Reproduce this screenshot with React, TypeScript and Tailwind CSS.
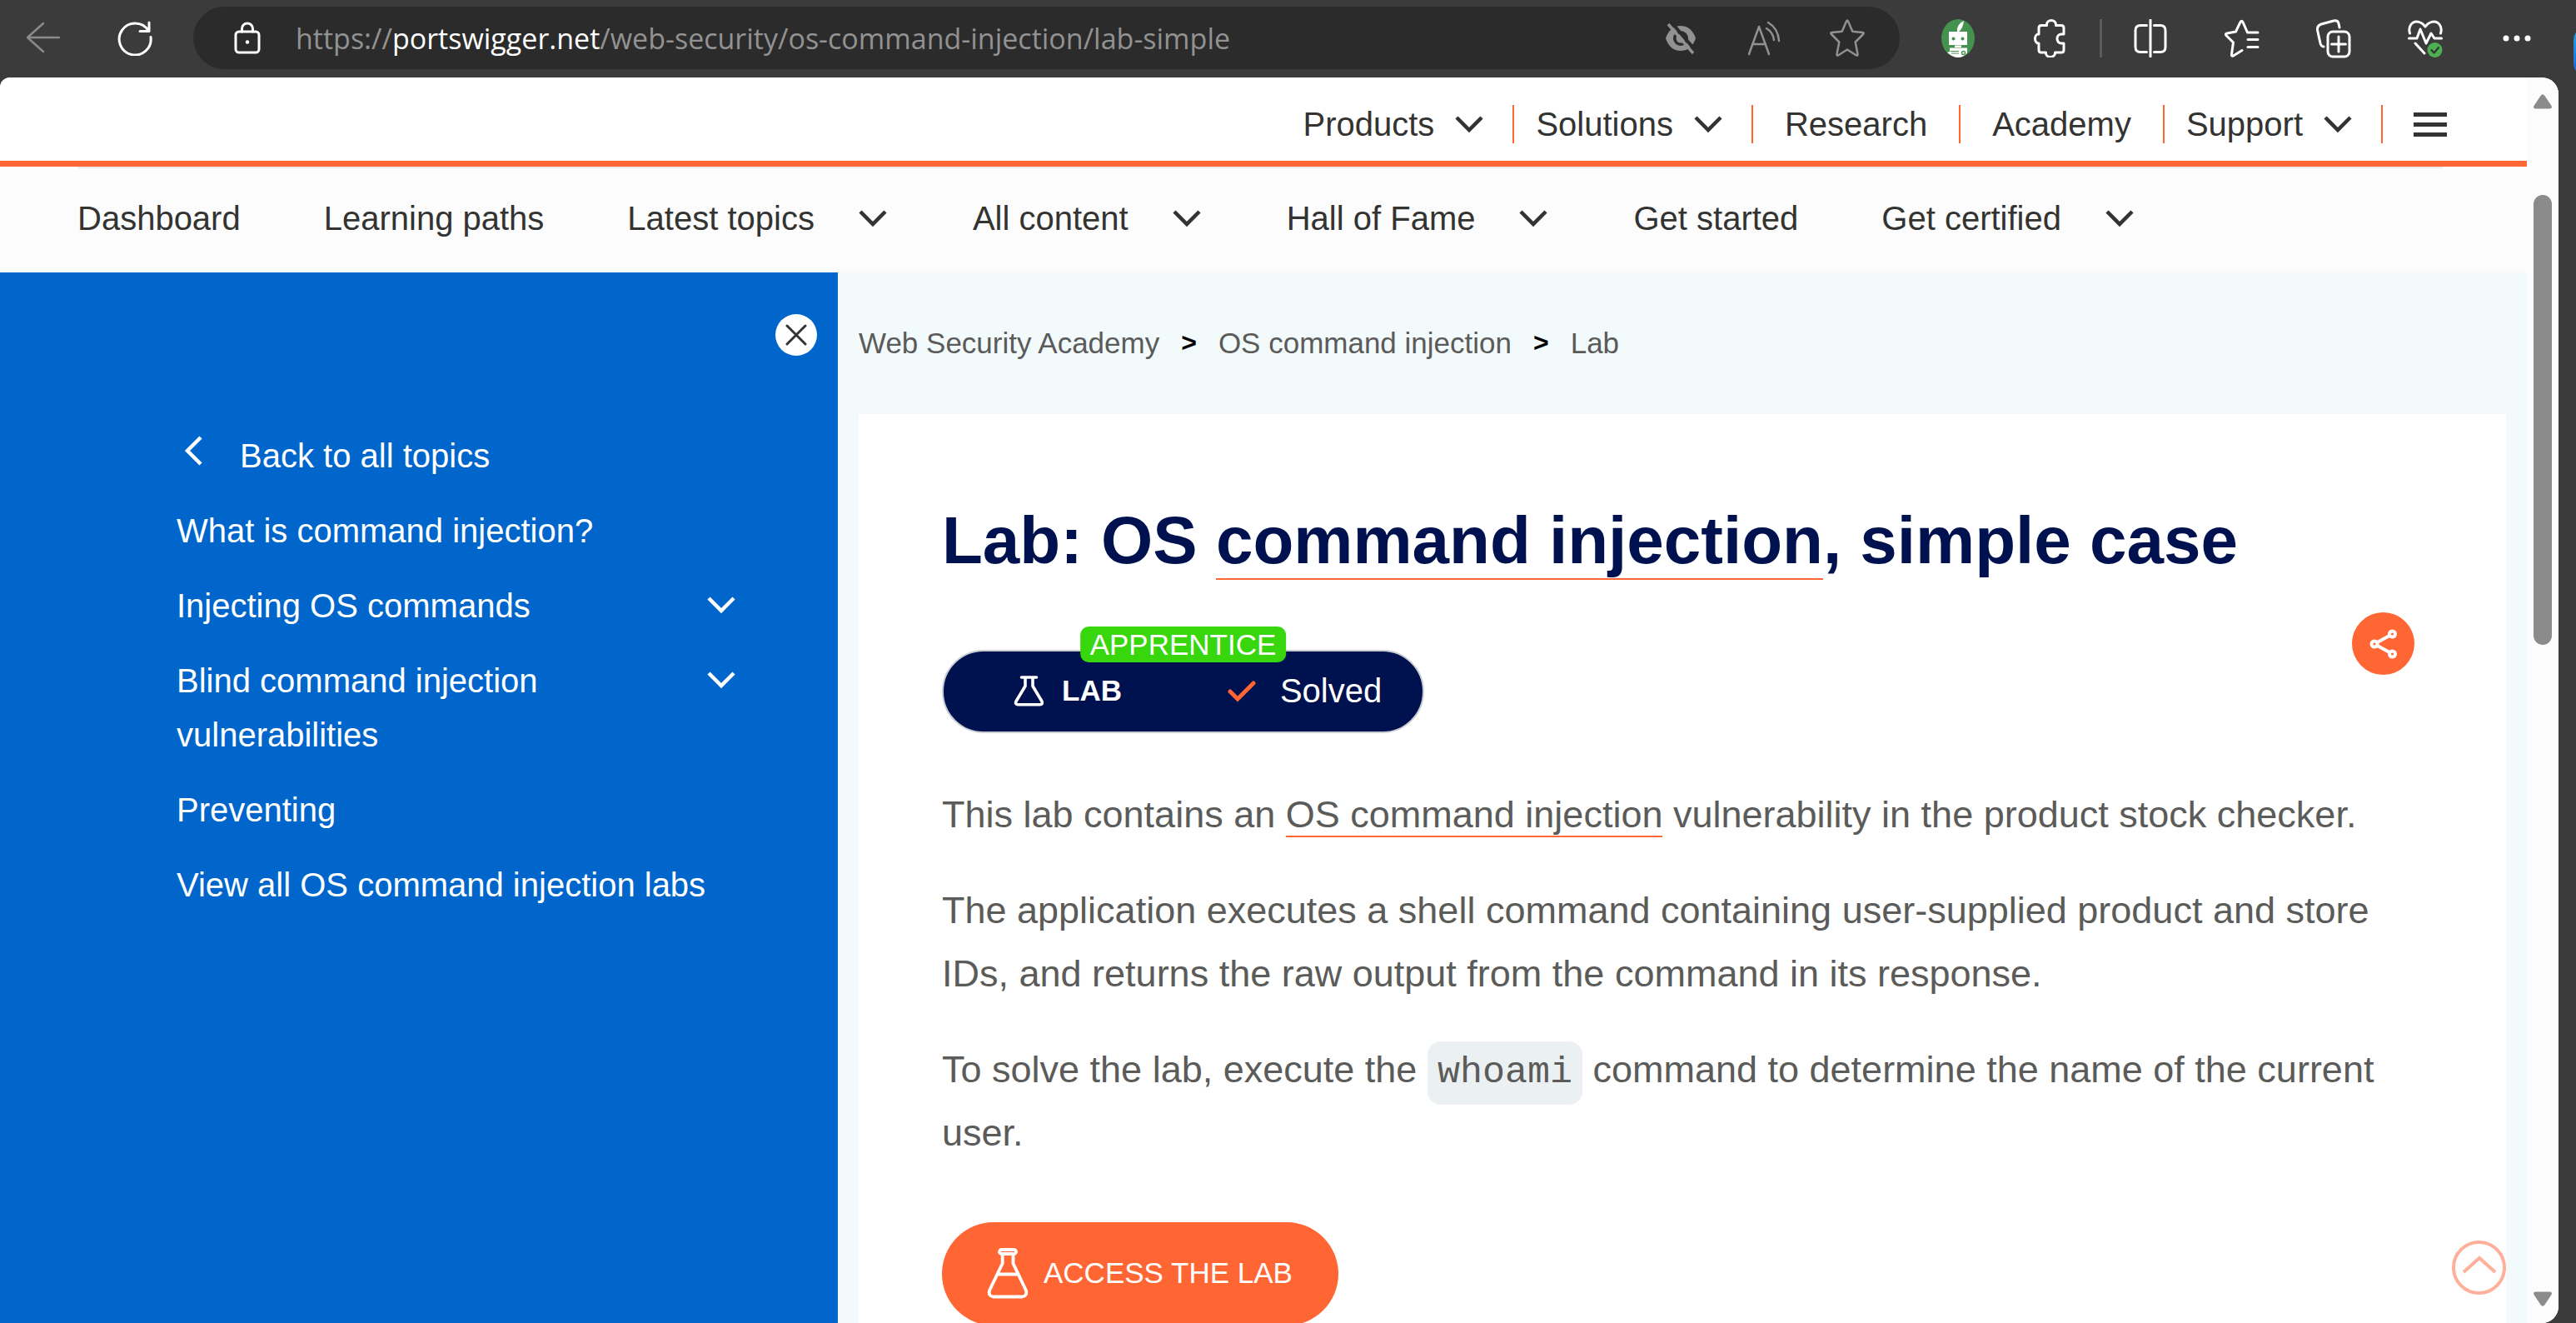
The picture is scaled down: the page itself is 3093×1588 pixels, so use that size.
import React from "react";

type IconProps = { className?: string };

const strokeProps = {
  fill: "none",
  stroke: "currentColor",
  strokeWidth: 3,
  strokeLinecap: "round" as const,
  strokeLinejoin: "round" as const,
  "aria-hidden": true,
};

function Chevron({ className = "" }: IconProps) {
  return (
    <svg viewBox="0 0 40 24" className={`h-6 w-10 shrink-0 ${className}`} fill="none" stroke="currentColor" strokeWidth="4.5" aria-hidden>
      <path d="M5 4 20 19 35 4" />
    </svg>
  );
}

function Flask({ className = "" }: IconProps) {
  return (
    <svg viewBox="0 0 36 38" className={className} {...strokeProps} strokeWidth="3.6">
      <path d="M9.500 3h18M14 3v10.500L3.200 31.500q-2 4 2 4.300h26.600q4-.3 2-4.300L23 13.500V3" />
    </svg>
  );
}

function Beaker({ className = "" }: IconProps) {
  return (
    <svg viewBox="0 0 50 62" className={className} {...strokeProps} strokeWidth="3.8">
      <rect x="15" y="3" width="20" height="5" rx="2.500" />
      <path d="M18.700 8v11.500L3 52q-1.500 6.500 4.500 7.500h35q6-1 4.500-7.500L31.500 19.500V8M13 32.500h24" />
    </svg>
  );
}

const mainNav = [
  { label: "Products", menu: true },
  { label: "Solutions", menu: true },
  { label: "Research", menu: false },
  { label: "Academy", menu: false },
  { label: "Support", menu: true },
];

const subNav = [
  { label: "Dashboard", menu: false },
  { label: "Learning paths", menu: false },
  { label: "Latest topics", menu: true },
  { label: "All content", menu: true },
  { label: "Hall of Fame", menu: true },
  { label: "Get started", menu: false },
  { label: "Get certified", menu: true },
];

const topics = [
  { label: "What is command injection?", menu: false },
  { label: "Injecting OS commands", menu: true },
  { label: "Blind command injection vulnerabilities", menu: true },
  { label: "Preventing", menu: false },
  { label: "View all OS command injection labs", menu: false },
];

function ToolButton({ label, children }: { label: string; children: React.ReactNode }) {
  return (
    <button type="button" aria-label={label} className="flex h-12 w-12 shrink-0 items-center justify-center">
      {children}
    </button>
  );
}

function BrowserBar() {
  return (
    <header className="relative flex h-[93px] shrink-0 items-center overflow-hidden bg-[#3b3b3b] pr-[47px] pb-[2px] pl-7 text-white">
      <ToolButton label="Back">
        <svg viewBox="0 0 40 40" className="h-10 w-10 text-[#8a8a8a]" {...strokeProps} strokeWidth="2.5">
          <path d="M39 19H1M20 2 1 19l19 17" />
        </svg>
      </ToolButton>
      <div className="ml-[62px]">
        <ToolButton label="Refresh">
          <svg viewBox="0 0 42 42" className="h-[42px] w-[42px]" {...strokeProps}>
            <path d="M40 19.500A19 19 0 1 1 37 11.500M38 2v10.500H27" />
          </svg>
        </ToolButton>
      </div>
      <div className="ml-[46px] flex h-[75px] min-w-0 grow items-center rounded-full bg-[#2b2b2b] pr-[39px] pl-[41px]">
        <ToolButton label="Site information">
          <svg viewBox="0 0 32 40" className="h-10 w-8" {...strokeProps}>
            <rect x="2" y="12" width="28" height="25" rx="4" />
            <path d="M9.500 12V8.500a6.500 6.500 0 0 1 13 0V12" />
            <circle cx="16" cy="24.500" r="1.500" fill="currentColor" strokeWidth="1.500" />
          </svg>
        </ToolButton>
        <a href="#url" className="ml-[34px] grow font-['Open_Sans',sans-serif] text-[34px] leading-[46px] whitespace-nowrap text-[#929292]">
          https://<span className="text-white">portswigger.net</span>/web-security/os-command-injection/lab-simple
        </a>
        <div className="flex items-center gap-[52px] text-[#919191]">
          <ToolButton label="Tracking prevention">
            <svg viewBox="0 0 38 38" className="h-[38px] w-[38px]" aria-hidden>
              <path d="M1 19C4 10 10 4 19 4s15 6 18 15c-3 9-9 15-18 15S4 28 1 19Z" fill="currentColor" />
              <circle cx="19" cy="19" r="9" fill="#2b2b2b" />
              <circle cx="19" cy="19" r="5.500" fill="currentColor" />
              <path d="M8 0 37 34" stroke="#2b2b2b" strokeWidth="4" />
              <path d="M4 2 34 37" stroke="currentColor" strokeWidth="3.500" />
            </svg>
          </ToolButton>
          <ToolButton label="Read aloud">
            <svg viewBox="0 0 40 42" className="h-[42px] w-10" {...strokeProps} strokeWidth="2.5">
              <path d="M2 40 14 7l12 33M6 28h16M23 9q8 5 9 14M25 2q12 7 13 22" />
            </svg>
          </ToolButton>
          <ToolButton label="Add to favourites">
            <svg viewBox="0 0 42 46" className="h-[46px] w-[42px]" {...strokeProps} strokeWidth="2.5">
              <path d="M20 2.500q1-2 2 0l5.300 12.300L39.500 16q2 .4.600 2l-9.400 9.500 2.800 14.500q.2 2-1.500 1.500L21 36.500 10 43.500q-1.700.5-1.500-1.500l2.800-14.500L1.900 18q-1.400-1.600.6-2l12.200-1.200Z" />
            </svg>
          </ToolButton>
        </div>
      </div>
      <div className="ml-[46px] flex shrink-0 items-center gap-[62px]">
        <ToolButton label="Extension">
          <svg viewBox="0 0 42 46" className="h-[46px] w-[42px]" aria-hidden>
            <ellipse cx="21" cy="23" rx="20" ry="23" fill="#45924f" />
            <path d="M20 15q-1-9 8-13-1 9-6 13Z" fill="#fff" />
            <rect x="10" y="15" width="22" height="16" fill="#fff" />
            <circle cx="15.500" cy="23.500" r="2" fill="#45924f" />
            <circle cx="26.500" cy="23.500" r="2" fill="#45924f" />
            <path d="M17 31.500h8V34h-8ZM11 34.500h21v6Q27 46 21 46t-13-6l3-1Z" fill="#fff" />
            <path d="M12 38.500h10M13 41h9" stroke="#45924f" strokeWidth="1" />
            <circle cx="27.500" cy="40.500" r="2" fill="none" stroke="#45924f" strokeWidth="1.500" />
          </svg>
        </ToolButton>
        <ToolButton label="Extensions">
          <svg viewBox="0 0 38 46" className="h-[46px] w-[38px]" {...strokeProps}>
            <path d="M9 7.500h6.500V6.500a5.500 5 0 0 1 11 0v1H33q3 0 3 3V18h-3a5 5.500 0 0 0 0 11h3v8q0 3-3 3h-7.500v1a5.500 4.500 0 0 1-11 0v-1H9q-3 0-3-3v-8H5.500a4 5.500 0 0 1 0-11H6v-7.500q0-3 3-3Z" />
          </svg>
        </ToolButton>
      </div>
      <div className="mr-[34px] ml-[36px] h-[46px] w-[3px] shrink-0 bg-[#5c5c5c]" />
      <div className="flex shrink-0 items-center gap-[62px]">
        <ToolButton label="Split screen">
          <svg viewBox="0 0 40 46" className="h-[46px] w-10" {...strokeProps}>
            <path d="M20 1v44M15.500 7.500H8q-6 0-6 6v20q0 6 6 6h7.500M24.500 7.500H32q6 0 6 6v20q0 6-6 6h-7.500" />
          </svg>
        </ToolButton>
        <ToolButton label="Favourites">
          <svg viewBox="0 0 42 46" className="h-[46px] w-[42px]" {...strokeProps}>
            <path d="M40 16H27.500L22 3.500q-1.500-2.500-3 0L13.500 15 3 17q-2.500.5-1 2.500l8.500 8.500-2 14q-.5 3 2 2L21 37.500M28 24.500h12M28 33.500h12" />
          </svg>
        </ToolButton>
        <ToolButton label="Collections">
          <svg viewBox="0 0 42 48" className="h-12 w-[42px]" {...strokeProps}>
            <rect x="14" y="16" width="26" height="30" rx="6" />
            <path d="M27 22v18M18.500 31h17M28 11l-1-5q-1-4-6-3L6 7q-5 2-4.500 7L5 30q1 4 4 4" />
          </svg>
        </ToolButton>
        <ToolButton label="Browser essentials">
          <svg viewBox="0 0 42 48" className="h-12 w-[42px]" {...strokeProps}>
            <path d="M2.500 18C0 10 5 4 10.500 4 15 4 18 6 21 10c3-4 6-6 10.500-6C37 4 42 10 39.500 18M1.500 24H11l4-11 7 17 6-12 4 6h8.500M9 30l11 12" />
            <circle cx="32.500" cy="38" r="9" fill="#4caf50" stroke="none" />
            <path d="m28.500 38 3 3.500 5.500-6.500" stroke="#303030" strokeWidth="2" />
          </svg>
        </ToolButton>
        <ToolButton label="Settings and more">
          <svg viewBox="0 0 36 8" className="h-2 w-9" fill="currentColor" aria-hidden>
            <circle cx="5" cy="4" r="3.500" />
            <circle cx="18" cy="4" r="3.500" />
            <circle cx="31" cy="4" r="3.500" />
          </svg>
        </ToolButton>
      </div>
      <div className="absolute top-[32px] -right-[57px] h-[60px] w-[60px] rounded-2xl bg-linear-to-b from-[#2aa5e0] to-[#1f5fd8]" />
    </header>
  );
}

function MainNav() {
  return (
    <nav aria-label="Main" className="flex h-[107px] shrink-0 items-center justify-end border-b-7 border-[#ff6633] bg-white pt-[12px] pr-[96px] text-[40px] leading-[50px] text-[#333332]">
      {mainNav.map((item) => (
        <div key={item.label} className="flex items-center">
          {item.menu ? (
            <button type="button" className="flex items-center gap-[22px] pr-[32px] pl-[26px]">
              {item.label}
              <Chevron />
            </button>
          ) : (
            <a href="#nav" className="px-[38px]">
              {item.label}
            </a>
          )}
          <span className="h-[46px] w-[2px] bg-[#ff6633]" />
        </div>
      ))}
      <button type="button" aria-label="Open menu" className="ml-[37px] flex w-10 flex-col gap-[7px]">
        <span className="h-[5px] bg-[#333332]" />
        <span className="h-[5px] bg-[#333332]" />
        <span className="h-[5px] bg-[#333332]" />
      </button>
    </nav>
  );
}

function SubNav() {
  return (
    <nav aria-label="Academy" className="h-[127px] shrink-0 bg-[#fcfcfc] pr-[101px] pl-[93px] text-[#333332]">
      <div className="flex h-full items-center gap-[100px] border-t-2 border-[#e9ebec] pb-[6px] text-[40px] leading-[50px] whitespace-nowrap">
        {subNav.map((item) =>
          item.menu ? (
            <button key={item.label} type="button" className="flex items-center gap-[50px]">
              {item.label}
              <Chevron />
            </button>
          ) : (
            <a key={item.label} href="#academy">
              {item.label}
            </a>
          ),
        )}
      </div>
    </nav>
  );
}

function Sidebar() {
  return (
    <aside className="flex w-[1006px] shrink-0 flex-col bg-[#0066cc] pt-[50px] text-[40px] leading-[65px] text-white">
      <button type="button" aria-label="Close" className="mr-[25px] flex h-[50px] w-[50px] items-center justify-center self-end rounded-full bg-white text-[#333332]">
        <svg viewBox="0 0 26 26" className="h-[26px] w-[26px]" {...strokeProps}>
          <path d="m2 2 22 22M24 2 2 24" />
        </svg>
      </button>
      <nav aria-label="Topics" className="mt-[88px] flex flex-col gap-[25px] pr-[120px] pl-[212px]">
        <a href="#topics" className="flex items-start gap-[36px]">
          <svg viewBox="0 0 40 40" className="mt-[6px] h-10 w-10" fill="none" stroke="currentColor" strokeWidth="4.500" aria-hidden>
            <path d="M29 4 13 20l16 16" />
          </svg>
          Back to all topics
        </a>
        {topics.map((item) =>
          item.menu ? (
            <button key={item.label} type="button" className="flex items-start justify-between text-left">
              <span className="max-w-[600px]">{item.label}</span>
              <Chevron className="mt-[19px]" />
            </button>
          ) : (
            <a key={item.label} href="#topic" className="whitespace-nowrap">
              {item.label}
            </a>
          ),
        )}
      </nav>
    </aside>
  );
}

function Article() {
  return (
    <main className="flex min-w-0 grow flex-col bg-[#f2fafc] px-[25px]">
      <nav aria-label="Breadcrumb" className="flex h-[170px] shrink-0 items-center gap-[26px] pb-[2px] text-[35px] leading-[45px] text-[#5b5b5a]">
        <a href="#academy">Web Security Academy</a>
        <span className="text-[32px] font-bold text-black">&gt;</span>
        <a href="#os">OS command injection</a>
        <span className="text-[32px] font-bold text-black">&gt;</span>
        <span>Lab</span>
      </nav>
      <article className="grow bg-white pt-[100px] pr-[110px] pl-[100px] text-[45px] leading-[76px] text-[#5b5b5a]">
        <h1 className="text-[80px] leading-[104px] font-bold text-[#00114f]">
          Lab: OS{" "}
          <a href="#injection" className="border-b-2 border-[#ff6633] pb-[1px]">
            command injection
          </a>
          , simple case
        </h1>
        <div className="mt-[34px] flex items-start justify-between">
          <div className="relative mt-[45px] flex h-[100px] w-[579px] items-center rounded-full border-2 border-[#c9cdd2] bg-[#00114f] pb-[2px] pl-[84px] leading-[50px] text-white">
            <span className="absolute -top-[30px] left-1/2 -translate-x-1/2 rounded-[10px] bg-[#37d60d] px-[12px] text-[35px] leading-[43px]">
              APPRENTICE
            </span>
            <Flask className="h-[38px] w-9" />
            <span className="ml-[22px] text-[35px] font-bold">LAB</span>
            <svg viewBox="0 0 34 28" className="ml-[127px] h-7 w-[34px]" fill="none" stroke="#ff6633" strokeWidth="5" strokeLinecap="round" aria-hidden>
              <path d="m3 15 9 9L31 5" />
            </svg>
            <span className="ml-[29px] text-[40px]">Solved</span>
          </div>
          <button type="button" aria-label="Share" className="flex h-[75px] w-[75px] items-center justify-center rounded-full bg-[#ff6633] text-white">
            <svg viewBox="0 0 36 38" className="h-[38px] w-9" fill="none" stroke="currentColor" strokeWidth="4" aria-hidden>
              <circle cx="7" cy="19" r="3.500" />
              <circle cx="28.500" cy="7" r="3.500" />
              <circle cx="28.500" cy="31" r="3.500" />
              <path d="m10.500 17 14.500-8M10.500 21 25 29" />
            </svg>
          </button>
        </div>
        <div className="mt-[60px] flex flex-col gap-[39px]">
          <p>
            This lab contains an{" "}
            <a href="#injection" className="border-b-2 border-[#ff6633]">
              OS command injection
            </a>{" "}
            vulnerability in the product stock checker.
          </p>
          <p>
            The application executes a shell command containing user-supplied product and store IDs, and returns the raw output from the command in its response.
          </p>
          <p>
            To solve the lab, execute the{" "}
            <code className="-my-1 inline-block rounded-[16px] bg-[#ebf0f3] px-[12px] font-['Liberation_Mono',monospace] text-[45px] leading-[76px]">whoami</code>{" "}
            command to determine the name of the current user.
          </p>
        </div>
        <button type="button" className="mt-[69px] flex h-[124px] items-center gap-[18px] rounded-full bg-[#ff6633] pr-[55px] pb-[2px] pl-[54px] text-[35px] leading-[50px] text-white">
          <Beaker className="h-[62px] w-[50px]" />
          ACCESS THE LAB
        </button>
      </article>
    </main>
  );
}

function Scrollbar() {
  return (
    <div aria-hidden className="flex w-[38px] shrink-0 flex-col items-center bg-[#fcfcfc] py-5">
      <svg viewBox="0 0 24 18" className="h-[18px] w-6" fill="#8b8b8b">
        <path d="M9.500 2q2.500-3.500 5 0l8 12q1.500 3.500-2 3.500h-17q-3.500 0-2-3.500Z" />
      </svg>
      <div className="mt-[103px] h-[540px] w-[22px] rounded-full bg-[#8b8b8b]" />
      <svg viewBox="0 0 24 18" className="mt-auto h-[18px] w-6" fill="#8b8b8b">
        <path d="M9.500 16q2.500 3.500 5 0l8-12Q24 .5 20.500.5h-17Q0 .5 1.500 4Z" />
      </svg>
    </div>
  );
}

export default function App() {
  return (
    <div className="flex h-screen flex-col overflow-hidden bg-[#3b3b3b] font-['Liberation_Sans',Arial,sans-serif]">
      <BrowserBar />
      <div className="relative mr-[21px] flex min-h-0 grow overflow-hidden rounded-tl-[12px] rounded-tr-[20px] rounded-br-[20px] bg-white">
        <div className="flex min-w-0 grow flex-col">
          <MainNav />
          <SubNav />
          <div className="flex min-h-0 grow">
            <Sidebar />
            <Article />
          </div>
        </div>
        <Scrollbar />
        <button type="button" aria-label="Back to top" className="absolute right-[63px] bottom-[34px] flex h-[65px] w-[65px] items-center justify-center rounded-full border-4 border-[#ffb09a] pb-[6px] text-[#ffb09a]">
          <svg viewBox="0 0 44 24" className="h-6 w-11" fill="none" stroke="currentColor" strokeWidth="4" aria-hidden>
            <path d="M3 20 22 3l19 17" />
          </svg>
        </button>
      </div>
    </div>
  );
}
